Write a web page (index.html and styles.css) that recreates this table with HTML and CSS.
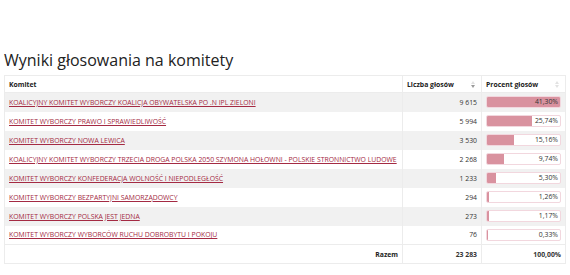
FILE: index.html
```html
<!DOCTYPE html>
<html lang="pl">
<head>
    <meta charset="UTF-8">
    <meta name="viewport" content="width=device-width, initial-scale=1.0">
    <title>Wyniki głosowania na komitety</title>
    <link rel="stylesheet" href="styles.css">
</head>
<body>
    <section class="results">
        <h2 class="results-title">Wyniki głosowania na komitety</h2>

        <table class="results-table">
            <thead>
                <tr>
                    <th class="col-name">Komitet</th>
                    <th class="col-votes sortable sorted-desc">Liczba głosów</th>
                    <th class="col-pct sortable">Procent głosów</th>
                </tr>
            </thead>
            <tbody>
                <tr>
                    <td><a href="#">KOALICYJNY KOMITET WYBORCZY KOALICJA OBYWATELSKA PO .N IPL ZIELONI</a></td>
                    <td class="num">9 615</td>
                    <td><div class="bar"><span class="bar-fill" style="width: 100%"></span><span class="bar-label">41,30%</span></div></td>
                </tr>
                <tr>
                    <td><a href="#">KOMITET WYBORCZY PRAWO I SPRAWIEDLIWOŚĆ</a></td>
                    <td class="num">5 994</td>
                    <td><div class="bar"><span class="bar-fill" style="width: 62.3%"></span><span class="bar-label">25,74%</span></div></td>
                </tr>
                <tr>
                    <td><a href="#">KOMITET WYBORCZY NOWA LEWICA</a></td>
                    <td class="num">3 530</td>
                    <td><div class="bar"><span class="bar-fill" style="width: 36.7%"></span><span class="bar-label">15,16%</span></div></td>
                </tr>
                <tr>
                    <td><a href="#">KOALICYJNY KOMITET WYBORCZY TRZECIA DROGA POLSKA 2050 SZYMONA HOŁOWNI - POLSKIE STRONNICTWO LUDOWE</a></td>
                    <td class="num">2 268</td>
                    <td><div class="bar"><span class="bar-fill" style="width: 23.6%"></span><span class="bar-label">9,74%</span></div></td>
                </tr>
                <tr>
                    <td><a href="#">KOMITET WYBORCZY KONFEDERACJA WOLNOŚĆ I NIEPODLEGŁOŚĆ</a></td>
                    <td class="num">1 233</td>
                    <td><div class="bar"><span class="bar-fill" style="width: 12.8%"></span><span class="bar-label">5,30%</span></div></td>
                </tr>
                <tr>
                    <td><a href="#">KOMITET WYBORCZY BEZPARTYJNI SAMORZĄDOWCY</a></td>
                    <td class="num">294</td>
                    <td><div class="bar"><span class="bar-fill" style="width: 3.1%"></span><span class="bar-label">1,26%</span></div></td>
                </tr>
                <tr>
                    <td><a href="#">KOMITET WYBORCZY POLSKA JEST JEDNA</a></td>
                    <td class="num">273</td>
                    <td><div class="bar"><span class="bar-fill" style="width: 2.8%"></span><span class="bar-label">1,17%</span></div></td>
                </tr>
                <tr>
                    <td><a href="#">KOMITET WYBORCZY WYBORCÓW RUCHU DOBROBYTU I POKOJU</a></td>
                    <td class="num">76</td>
                    <td><div class="bar"><span class="bar-fill" style="width: 0.8%"></span><span class="bar-label">0,33%</span></div></td>
                </tr>
            </tbody>
            <tfoot>
                <tr>
                    <td class="total-label">Razem</td>
                    <td class="num">23 283</td>
                    <td class="num">100,00%</td>
                </tr>
            </tfoot>
        </table>
    </section>
</body>
</html>
```

FILE: styles.css
```css
* {
    margin: 0;
    padding: 0;
    box-sizing: border-box;
}

body {
    font-family: 'Open Sans', 'Liberation Sans', sans-serif;
    background: #ffffff;
    color: #333333;
}

.results {
    padding: 50px 4px 0 4px;
}

.results-title {
    font-size: 16px;
    font-weight: 400;
    line-height: 21px;
    color: #222222;
    margin-bottom: 4px;
}

/* Table */
.results-table {
    width: 562px;
    table-layout: fixed;
    border-collapse: collapse;
    border: 1px solid #ececec;
    font-size: 6.85px;
}

.results-table th,
.results-table td {
    border-left: 1px solid #ececec;
    padding: 0 4px;
    height: 19px;
    vertical-align: middle;
    white-space: nowrap;
    overflow: hidden;
}

.results-table th {
    height: 17px;
    text-align: left;
    font-weight: 700;
    color: #222222;
    border-bottom: 1px solid #ececec;
}

.col-name {
    width: 398px;
}

.col-votes {
    width: 79px;
}

.sortable {
    position: relative;
    padding-right: 14px;
}

/* Sort arrows in headers */
.sortable::before,
.sortable::after {
    content: "";
    position: absolute;
    right: 6px;
    border-left: 2px solid transparent;
    border-right: 2px solid transparent;
}

.sortable::before {
    top: 5px;
    border-bottom: 3px solid #e2e2e2;
}

.sortable::after {
    top: 9px;
    border-top: 3px solid #e2e2e2;
}

.sorted-desc::after {
    border-top-color: #9a9a9a;
}

.results-table tbody tr:nth-child(odd) {
    background: #f1f1f1;
}

.results-table a {
    color: #a42a43;
    text-decoration: underline;
}

.num {
    text-align: right;
    color: #333333;
}

/* Percentage bar */
.bar {
    position: relative;
    height: 12px;
    border: 1px solid #f2d7de;
    border-radius: 2px;
    background: #ffffff;
    overflow: hidden;
}

.bar-fill {
    position: absolute;
    top: 0;
    left: 0;
    bottom: 0;
    background: #d9929f;
}

.bar-label {
    position: absolute;
    right: 2px;
    top: 0;
    line-height: 10px;
    color: #333333;
}

tfoot td {
    font-weight: 700;
    color: #222222;
    border-top: 1px solid #ececec;
}

.total-label {
    text-align: right;
    padding-right: 16px;
}
```
